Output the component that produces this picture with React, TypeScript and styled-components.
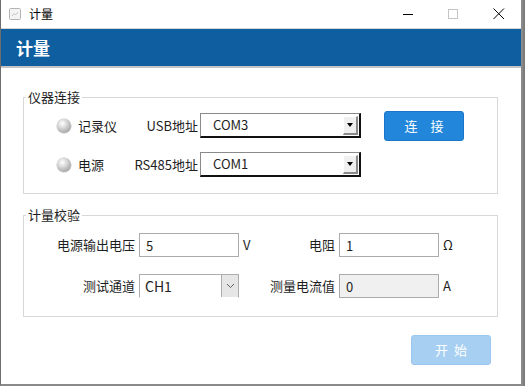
import styled, { createGlobalStyle } from 'styled-components';

const GlobalStyle = createGlobalStyle`
  html, body {
    margin: 0;
    padding: 0;
  }
  body {
    background: #7c7c7c;
    font-family: "Noto Sans CJK SC", "Microsoft YaHei", sans-serif;
    color: #1e1e1e;
  }
`;

const Window = styled.div`
  width: 520px;
  height: 384px;
  background: #fff;
  border-left: 1px solid #6e6e6e;
  border-right: 2px solid #8a8a8a;
  border-bottom: 2px solid #8a8a8a;
  display: flex;
  flex-direction: column;
`;

const TitleBar = styled.div`
  height: 28px;
  border-bottom: 1px solid #d6d6d6;
  display: flex;
  align-items: center;
  padding-left: 8px;
  font-size: 12px;
  line-height: 16px;
  color: #000;
`;

const TitleText = styled.span`
  margin-left: 8px;
  flex: 1;
`;

const Controls = styled.div`
  display: flex;
  align-items: center;
  height: 100%;
`;

const ControlButton = styled.div`
  width: 45px;
  height: 28px;
  display: flex;
  align-items: center;
  justify-content: center;
`;

const Header = styled.div`
  height: 37px;
  background: #0e5ea0;
  border-bottom: 2px solid #c4c4c4;
  display: flex;
  align-items: center;
  padding-left: 15px;
  color: #fff;
  font-size: 17px;
  font-weight: bold;
`;

const Body = styled.div`
  flex: 1;
  display: flex;
  flex-direction: column;
`;

const Group = styled.fieldset<{ $top: number; $pt: number; $pb: number }>`
  margin: ${(p) => p.$top}px 0 0 22px;
  width: 475px;
  box-sizing: border-box;
  border: 1px solid #d8d8d8;
  padding: ${(p) => p.$pt}px 0 ${(p) => p.$pb}px 0;
  min-width: 0;
`;

const Legend = styled.legend`
  font-size: 13px;
  line-height: 18px;
  padding: 0 2px;
  margin-left: 2px;
  color: #1e1e1e;
`;

const ConnectArea = styled.div`
  display: flex;
  align-items: flex-start;
  padding-left: 33px;
`;

const ConnectGrid = styled.div`
  display: grid;
  grid-template-columns: 21px 40px 82px 161px;
  grid-auto-rows: 25px;
  row-gap: 14px;
  align-items: center;
  margin-top: 2px;
  font-size: 13px;
  line-height: 18px;
`;

const Led = styled.span`
  width: 14px;
  height: 14px;
  border-radius: 50%;
  background: radial-gradient(circle at 38% 32%, #ffffff 0%, #dedede 30%, #a8a8a8 75%, #858585 100%);
  box-shadow: 0 0 0 0.5px #b8b8b8;
`;

const Label = styled.span<{ $right?: boolean }>`
  text-align: ${(p) => (p.$right ? 'right' : 'left')};
  padding-right: ${(p) => (p.$right ? '2px' : '0')};
  white-space: nowrap;
`;

const Select = styled.div`
  height: 25px;
  box-sizing: border-box;
  border-top: 1px solid #8a8a8a;
  border-left: 1px solid #8a8a8a;
  border-right: 2px solid #111;
  border-bottom: 2px solid #111;
  display: flex;
  align-items: center;
  justify-content: space-between;
  padding-left: 12px;
  padding-right: 1px;
  font-size: 13px;
`;

const DropButton = styled.span`
  width: 15px;
  height: 19px;
  box-sizing: border-box;
  background: #f0f0f0;
  border-top: 1px solid #fff;
  border-left: 1px solid #fff;
  border-right: 2px solid #8a8a8a;
  border-bottom: 2px solid #8a8a8a;
  display: flex;
  align-items: center;
  justify-content: center;
  &::after {
    content: '';
    border-left: 3.5px solid transparent;
    border-right: 3.5px solid transparent;
    border-top: 4px solid #000;
  }
`;

const BlueButton = styled.button<{ $disabled?: boolean }>`
  width: 80px;
  height: 30px;
  border-radius: 3px;
  border: 1px solid ${(p) => (p.$disabled ? '#9cc7ee' : '#1a75c8')};
  background: ${(p) => (p.$disabled ? '#a6cff2' : '#2287da')};
  color: #fff;
  font-family: inherit;
  font-size: 13px;
  line-height: 18px;
  word-spacing: 3px;
  padding: 0;
  cursor: pointer;
`;

const ConnectButton = styled(BlueButton)`
  margin-left: 23px;
`;

const MeasureGrid = styled.div`
  display: grid;
  grid-template-columns: 113px 100px 20px 74px 100px auto;
  column-gap: 2px;
  grid-auto-rows: 24px;
  row-gap: 17px;
  align-items: center;
  font-size: 13px;
  line-height: 18px;
`;

const Unit = styled.span`
  padding-left: 2px;
  font-size: 13px;
`;

const Field = styled.input<{ $grey?: boolean }>`
  width: 100px;
  height: 24px;
  box-sizing: border-box;
  border: 1px solid #ababab;
  background: ${(p) => (p.$grey ? '#f0f0f0' : '#fff')};
  padding: 0 0 0 6px;
  font-family: inherit;
  font-size: 13px;
  color: #1e1e1e;
  outline: none;
`;

const Combo = styled.div`
  width: 100px;
  height: 24px;
  box-sizing: border-box;
  border: 1px solid #adadad;
  border-bottom-color: transparent;
  display: flex;
  align-items: center;
  justify-content: space-between;
  padding-left: 5px;
  font-size: 14px;
`;

const ComboButton = styled.span`
  width: 17px;
  height: 22px;
  box-sizing: border-box;
  background: #e6e6e6;
  border-left: 1px solid #adadad;
  display: flex;
  align-items: center;
  justify-content: center;
`;

const Footer = styled.div`
  display: flex;
  justify-content: flex-end;
  padding: 18px 30px 0 0;
`;

export default function App() {
  return (
    <>
      <GlobalStyle />
      <Window>
        <TitleBar>
          <svg width="12" height="12" viewBox="0 0 12 12">
            <rect x="0.5" y="0.5" width="11" height="11" rx="1" fill="#f4f4f4" stroke="#b4b4b4" />
            <path d="M3 8 L5 5.5 L6.5 7 L9 4" fill="none" stroke="#c4c4c4" strokeWidth="1" />
          </svg>
          <TitleText>计量</TitleText>
          <Controls>
            <ControlButton>
              <svg width="11" height="11" viewBox="0 0 11 11">
                <line x1="0" y1="5.5" x2="10" y2="5.5" stroke="#000" strokeWidth="1" />
              </svg>
            </ControlButton>
            <ControlButton>
              <svg width="11" height="11" viewBox="0 0 11 11">
                <rect x="0.5" y="0.5" width="9" height="9" fill="none" stroke="#c4c4c4" />
              </svg>
            </ControlButton>
            <ControlButton>
              <svg width="12" height="12" viewBox="0 0 12 12">
                <path d="M0.5 0.5 L11 11 M11 0.5 L0.5 11" stroke="#000" strokeWidth="1" />
              </svg>
            </ControlButton>
          </Controls>
        </TitleBar>
        <Header>计量</Header>
        <Body>
          <Group $top={20} $pt={5} $pb={16}>
            <Legend>仪器连接</Legend>
            <ConnectArea>
              <ConnectGrid>
                <Led />
                <Label>记录仪</Label>
                <Label $right>USB地址</Label>
                <Select>
                  COM3
                  <DropButton />
                </Select>
                <Led />
                <Label>电源</Label>
                <Label $right>RS485地址</Label>
                <Select>
                  COM1
                  <DropButton />
                </Select>
              </ConnectGrid>
              <ConnectButton>连　接</ConnectButton>
            </ConnectArea>
          </Group>
          <Group $top={12} $pt={9} $pb={18}>
            <Legend>计量校验</Legend>
            <MeasureGrid>
              <Label $right>电源输出电压</Label>
              <Field defaultValue="5" />
              <Unit>V</Unit>
              <Label $right>电阻</Label>
              <Field defaultValue="1" />
              <Unit>Ω</Unit>
              <Label $right>测试通道</Label>
              <Combo>
                CH1
                <ComboButton>
                  <svg width="9" height="6" viewBox="0 0 9 6">
                    <path d="M1 1 L4.5 4.5 L8 1" fill="none" stroke="#606060" strokeWidth="1" />
                  </svg>
                </ComboButton>
              </Combo>
              <span />
              <Label $right>测量电流值</Label>
              <Field $grey readOnly defaultValue="0" />
              <Unit>A</Unit>
            </MeasureGrid>
          </Group>
          <Footer>
            <BlueButton $disabled>开 始</BlueButton>
          </Footer>
        </Body>
      </Window>
    </>
  );
}
